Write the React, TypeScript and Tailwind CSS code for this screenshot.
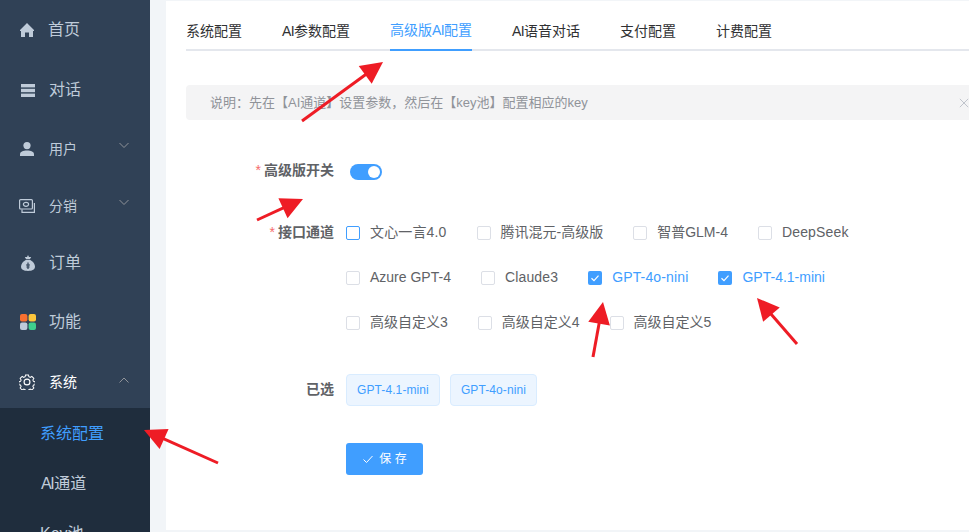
import React from "react";

const cjk = '"Liberation Sans","Noto Sans CJK SC",sans-serif';

function Check({ className = "" }: { className?: string }) {
  return (
    <svg viewBox="0 0 14 14" className={className} fill="none" stroke="#fff" strokeWidth="1.2">
      <path d="M3.5 7.2 L6 9.6 L10.5 4.6" />
    </svg>
  );
}

function CheckItem({ label, on, focus, wide }: { label: string; on?: boolean; focus?: boolean; wide?: boolean }) {
  return (
    <div className="flex items-center">
      <span
        className={
          on
            ? "flex h-[14px] w-[14px] items-center justify-center rounded-[2px] bg-[#409eff]"
            : focus
            ? "h-[14px] w-[14px] rounded-[2px] border border-[#409eff] bg-white"
            : "h-[14px] w-[14px] rounded-[2px] border border-[#dcdfe6] bg-white"
        }
      >
        {on && <Check className="h-[14px] w-[14px]" />}
      </span>
      <span className={`ml-[10px] text-[14px] ${wide ? "tracking-[0.15px]" : ""} ${on ? "text-[#409eff]" : "text-[#606266]"}`}>{label}</span>
    </div>
  );
}

function Chevron({ up }: { up?: boolean }) {
  return (
    <svg viewBox="0 0 12 12" className={`absolute right-[20px] top-1/2 h-[12px] w-[12px] ${up ? "-mt-[6px]" : "-mt-[10px]"}`} fill="none" stroke="#909399" strokeWidth="1">
      <path d={up ? "M1.5 8.5 L6 4 L10.5 8.5" : "M1.5 4 L6 8.5 L10.5 4"} />
    </svg>
  );
}

const icons: Record<string, React.ReactNode> = {
  home: (
    <svg viewBox="0 0 14 14" className="h-[14px] w-[14px] shrink-0" fill="#bfcbd9">
      <path d="M7 0 L14 7 L14 8 L13 8 L13 14 L9 14 L9 9.5 L5 9.5 L5 14 L1 14 L1 8 L0 8 L0 7 Z" />
    </svg>
  ),
  chat: (
    <svg viewBox="0 0 14 13" className="ml-[1px] h-[13px] w-[14px] shrink-0" fill="#bfcbd9">
      <rect x="0" y="0" width="14" height="3.4" />
      <rect x="0" y="4.8" width="14" height="3.4" />
      <rect x="0" y="9.6" width="14" height="3.4" />
    </svg>
  ),
  user: (
    <svg viewBox="0 0 14 14" className="h-[14px] w-[14px] shrink-0" fill="#bfcbd9">
      <circle cx="7" cy="3.6" r="3.6" />
      <path d="M0 14 L0 12.2 C0 9.6 3 8.4 7 8.4 C11 8.4 14 9.6 14 12.2 L14 14 Z" />
    </svg>
  ),
  share: (
    <svg viewBox="0 0 16 14" className="-ml-[1px] h-[14px] w-[16px] shrink-0" fill="none" stroke="#bfcbd9" strokeWidth="1.2">
      <rect x="0.6" y="0.6" width="12.8" height="9.4" rx="1" />
      <ellipse cx="7" cy="5.3" rx="2.6" ry="2" />
      <path d="M15.4 4 L15.4 13.4 L3 13.4 L3 10.5" />
    </svg>
  ),
  bag: (
    <svg viewBox="0 0 14 16" className="ml-[1px] h-[16px] w-[14px] shrink-0" fill="#bfcbd9">
      <path d="M7 0 L8 2 L10.2 2 L9 4 L5 4 L3.8 2 L6 2 Z" />
      <path d="M5 4.8 L9 4.8 C12 6.6 14 9 14 11.6 C14 14.6 11.5 16 7 16 C2.5 16 0 14.6 0 11.6 C0 9 2 6.6 5 4.8 Z" />
      <path d="M7 7.5 L7 14 M5 10 L9 10 M5.4 12 L8.6 12" stroke="#304156" strokeWidth="1.2" />
    </svg>
  ),
  apps: (
    <svg viewBox="0 0 16 16" className="h-[16px] w-[16px] shrink-0">
      <rect x="0" y="0" width="7.4" height="7.4" rx="2" fill="#f97030" />
      <rect x="8.6" y="0" width="7.4" height="7.4" rx="2" fill="#fdc63c" />
      <rect x="0" y="8.6" width="7.4" height="7.4" rx="2" fill="#bfcbd9" />
      <rect x="8.6" y="8.6" width="7.4" height="7.4" rx="2" fill="#3fcf8e" />
    </svg>
  ),
  gear: (
    <svg viewBox="0 0 24 24" className="-ml-[1px] h-[16px] w-[16px] shrink-0" fill="none" stroke="#fff" strokeWidth="1.7">
      <circle cx="12" cy="12" r="4.4" />
      <path d="M9.6 1.2 h4.8 l.7 3 2.3 1 2.6-1.6 3.4 3.4-1.6 2.6 1 2.3 3 .7 v4.8 l-3 .7-1 2.3 1.6 2.6-3.4 3.4-2.6-1.6-2.3 1-.7 3 h-4.8 l-.7-3-2.3-1-2.6 1.6-3.4-3.4 1.6-2.6-1-2.3-3-.7 v-4.8 l3-.7 1-2.3-1.6-2.6 3.4-3.4 2.6 1.6 2.3-1 z" transform="translate(1.2 .3) scale(.9)" />
    </svg>
  ),
};

function MenuRow({ icon, label, h, big, chev, active, ml }: { icon: string; label: string; h: string; big?: boolean; chev?: "up" | "down"; active?: boolean; ml: string }) {
  return (
    <div className={`relative flex shrink-0 items-center pl-[20px] ${h}`}>
      <span className="flex w-[16px] shrink-0 items-center justify-start overflow-visible">{icons[icon]}</span>
      <span className={`${ml} ${big ? "text-[16px]" : "text-[14px]"} ${active ? "text-white" : "text-[#bfcbd9]"}`}>{label}</span>
      {chev && <Chevron up={chev === "up"} />}
    </div>
  );
}

function Arrow({ x1, y1, x2, y2, className }: { x1: number; y1: number; x2: number; y2: number; className: string }) {
  const a = Math.atan2(y2 - y1, x2 - x1);
  const len = 22;
  const w = 11;
  const bx = x2 - Math.cos(a) * len;
  const by = y2 - Math.sin(a) * len;
  const nx = -Math.sin(a) * w;
  const ny = Math.cos(a) * w;
  return (
    <polygon className={className} points={`${x2},${y2} ${bx + nx},${by + ny} ${bx - nx},${by - ny}`} />
  );
}

const arrows: [number, number, number, number][] = [
  [302, 121, 383, 62],
  [257, 220, 303, 199],
  [218, 463, 144, 430],
  [593, 357, 603, 302],
  [797, 344, 757, 298],
];

const AI = <span className="tracking-[-0.6px]">AI</span>;

export default function App() {
  return (
    <div className="relative flex h-[532px] w-[969px] overflow-hidden bg-[#f2f5f8]" style={{ fontFamily: cjk }}>
      <aside className="flex h-full w-[150px] shrink-0 flex-col overflow-hidden bg-[#304156]">
        <MenuRow icon="home" label="首页" h="h-[60px]" big ml="ml-[12px]" />
        <MenuRow icon="chat" label="对话" h="h-[60px]" big ml="ml-[13px]" />
        <MenuRow icon="user" label="用户" h="h-[58px]" ml="ml-[13px]" chev="down" />
        <MenuRow icon="share" label="分销" h="h-[56px]" ml="ml-[13px]" chev="down" />
        <MenuRow icon="bag" label="订单" h="h-[58px]" big ml="ml-[13px]" />
        <MenuRow icon="apps" label="功能" h="h-[60px]" big ml="ml-[13px]" />
        <MenuRow icon="gear" label="系统" h="h-[56px] pt-[4px]" ml="ml-[13px]" chev="up" active />
        <div className="flex shrink-0 flex-col bg-[#1f2d3d] pt-[1px] text-[16px]">
          <div className="flex h-[50px] shrink-0 items-center pl-[40px] text-[#409eff]">系统配置</div>
          <div className="flex h-[50px] shrink-0 items-center pl-[41px] text-[#bfcbd9]">
            <span className="tracking-[-1.5px]">AI</span>
            <span className="ml-[1px]">通道</span>
          </div>
          <div className="flex h-[50px] shrink-0 items-center pl-[40px] text-[#bfcbd9]">Key池</div>
        </div>
      </aside>

      <main className="ml-[16px] mt-px h-[529px] w-[803px] shrink-0 bg-white pl-[20px] pt-[10px]">
        <div className="flex h-[40px] gap-[40px] border-b-2 border-[#e4e7ed] text-[14px] text-[#303133]">
          <div className="flex h-[40px] items-center">系统配置</div>
          <div className="flex h-[40px] items-center">{AI}参数配置</div>
          <div className="flex h-[40px] items-center border-b-2 border-[#409eff] text-[#409eff]">高级版{AI}配置</div>
          <div className="flex h-[40px] items-center">{AI}语音对话</div>
          <div className="flex h-[40px] items-center">支付配置</div>
          <div className="flex h-[40px] items-center">计费配置</div>
        </div>

        <div className="relative mt-[34px] flex h-[35px] w-[790px] items-center rounded-[4px] bg-[#f4f4f5] pl-[24px] text-[13px] text-[#909399]">
          说明：先在【AI通道】设置参数，然后在【key池】配置相应的key
          <svg viewBox="0 0 12 12" className="absolute right-[7px] top-[13px] h-[10px] w-[10px]" stroke="#c0c4cc" strokeWidth="1.2" fill="none">
            <path d="M1 1 L11 11 M11 1 L1 11" />
          </svg>
        </div>

        <div className="mt-[32px] flex h-[40px] items-center">
          <div className="w-[148px] pb-[4px] text-right text-[14px] font-bold text-[#606266]">
            <span className="mr-[3px] font-normal text-[#f56c6c]">*</span>高级版开关
          </div>
          <div className="ml-[16px] flex h-[16px] w-[32px] items-center justify-end rounded-full bg-[#409eff] pr-[2px]">
            <span className="h-[12px] w-[12px] rounded-full bg-white" />
          </div>
        </div>

        <div className="mt-[18px] flex">
          <div className="flex h-[45px] w-[148px] items-center justify-end text-[14px] font-bold text-[#606266]">
            <span className="mr-[3px] font-normal text-[#f56c6c]">*</span>接口通道
          </div>
          <div className="ml-[12px] flex flex-col">
            <div className="flex h-[45px] items-center gap-[30px]">
              <CheckItem label="文心一言4.0" focus wide />
              <CheckItem label="腾讯混元-高级版" />
              <CheckItem label="智普GLM-4" />
              <CheckItem label="DeepSeek" wide />
            </div>
            <div className="flex h-[45px] items-center gap-[30px]">
              <CheckItem label="Azure GPT-4" />
              <CheckItem label="Claude3" wide />
              <CheckItem label="GPT-4o-nini" on wide />
              <CheckItem label="GPT-4.1-mini" on />
            </div>
            <div className="flex h-[45px] items-center gap-[30px]">
              <CheckItem label="高级自定义3" />
              <CheckItem label="高级自定义4" />
              <CheckItem label="高级自定义5" />
            </div>
          </div>
        </div>

        <div className="mt-[29px] flex h-[32px] items-center">
          <div className="w-[148px] pb-[2px] text-right text-[14px] font-bold text-[#606266]">已选</div>
          <div className="ml-[12px] flex gap-[10px]">
            <span className="flex h-[32px] items-center rounded-[4px] border border-[#d9ecff] bg-[#ecf5ff] px-[10px] text-[12px] tracking-[0.1px] text-[#409eff]">GPT-4.1-mini</span>
            <span className="flex h-[32px] items-center rounded-[4px] border border-[#d9ecff] bg-[#ecf5ff] px-[10px] text-[12px] tracking-[0.1px] text-[#409eff]">GPT-4o-nini</span>
          </div>
        </div>

        <div className="ml-[160px] mt-[37px] flex h-[32px] w-[77px] items-center justify-center rounded-[3px] bg-[#409eff] text-[12px] text-white">
          <svg viewBox="0 0 12 12" className="mr-[5px] h-[12px] w-[12px]" fill="none" stroke="#fff" strokeWidth="1">
            <path d="M1.5 6.5 L4.5 9.5 L10.5 3" />
          </svg>
          保 存
        </div>
      </main>

      <svg viewBox="0 0 969 532" className="pointer-events-none absolute left-0 top-0 h-[532px] w-[969px]">
        {arrows.map(([x1, y1, x2, y2]) => (
          <g key={`${x1}-${y1}`}>
            <line x1={x1} y1={y1} x2={x2 - ((x2 - x1) / Math.hypot(x2 - x1, y2 - y1)) * 15} y2={y2 - ((y2 - y1) / Math.hypot(x2 - x1, y2 - y1)) * 15} stroke="#ee1c25" strokeWidth="3" />
            <Arrow x1={x1} y1={y1} x2={x2} y2={y2} className="fill-[#ee1c25]" />
          </g>
        ))}
      </svg>
    </div>
  );
}
